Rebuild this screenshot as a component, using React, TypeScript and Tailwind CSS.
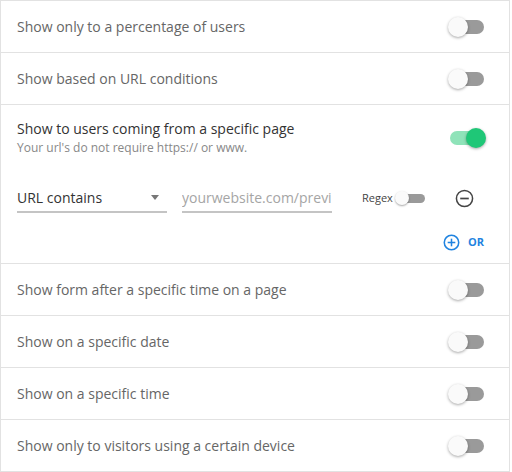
import React from "react";

type ToggleProps = { on?: boolean };

const Toggle = ({ on = false }: ToggleProps) => {
  return (
    <div className="relative w-[36px] h-[20px] flex items-center">
      <div
        className={
          on
            ? "absolute left-[2px] right-0 h-[14px] rounded-full bg-[#8fe3b9]"
            : "absolute left-[2px] right-0 h-[14px] rounded-full bg-[#9a9a9a]"
        }
      ></div>
      <div
        className={
          on
            ? "absolute right-[-2px] w-[20px] h-[20px] rounded-full bg-[#1fc777] shadow-[0_1px_3px_rgba(0,0,0,0.35)]"
            : "absolute left-0 w-[20px] h-[20px] rounded-full bg-[#fafafa] shadow-[0_1px_3px_rgba(0,0,0,0.35)]"
        }
      ></div>
    </div>
  );
};

const SmallToggle = () => {
  return (
    <div className="relative w-[30px] h-[14px] flex items-center">
      <div className="absolute left-[4px] right-0 h-[9px] rounded-full bg-[#9a9a9a]"></div>
      <div className="absolute left-0 w-[14px] h-[14px] rounded-full bg-[#fafafa] shadow-[0_1px_2px_rgba(0,0,0,0.35)]"></div>
    </div>
  );
};

const Row = ({ label }: { label: string }) => {
  return (
    <div className="h-[52px] flex items-center justify-between pl-4 pr-[25px] border-b border-[#e2e2e2]">
      <span className="text-[14px] text-[#666]">{label}</span>
      <Toggle />
    </div>
  );
};

export default function App() {
  return (
    <div className="w-[510px] border-l border-r border-t border-[#e2e2e2] bg-white font-['Open_Sans',sans-serif]">
      <Row label="Show only to a percentage of users" />
      <Row label="Show based on URL conditions" />

      <div className="border-b border-[#e2e2e2] pl-4 pr-[25px] pt-[14px] pb-[12px]">
        <div className="flex items-center justify-between">
          <div className="flex flex-col">
            <span className="text-[14px] leading-[20px] text-[#333]">
              Show to users coming from a specific page
            </span>
            <span className="text-[12px] leading-[18px] text-[#888]">
              Your url's do not require https:// or www.
            </span>
          </div>
          <Toggle on />
        </div>

        <div className="flex items-center mt-[26px] h-[30px]">
          <div className="w-[150px] h-[30px] flex items-center justify-between border-b-2 border-[#c4c4c4] pr-2">
            <span className="text-[14px] text-[#333]">URL contains</span>
            <span className="w-0 h-0 border-l-[4px] border-r-[4px] border-t-[5px] border-l-transparent border-r-transparent border-t-[#777]"></span>
          </div>
          <div className="w-[150px] h-[30px] ml-[15px] flex items-center border-b-2 border-[#c4c4c4] overflow-hidden">
            <span className="text-[14px] text-[#a5a5a5] whitespace-nowrap">
              yourwebsite.com/previ
            </span>
          </div>
          <div className="ml-[30px] flex items-center gap-[2px]">
            <span className="text-[11px] text-[#444]">Regex</span>
            <SmallToggle />
          </div>
          <div className="ml-auto mr-[10px] flex items-center">
            <svg width="19" height="19" viewBox="0 0 20 20">
              <circle cx="10" cy="10" r="8.5" fill="none" stroke="#444" strokeWidth="1.6" />
              <line x1="5.5" y1="10" x2="14.5" y2="10" stroke="#444" strokeWidth="1.8" />
            </svg>
          </div>
        </div>

        <div className="flex items-center justify-end mt-[21px] gap-[8px]">
          <svg width="17" height="17" viewBox="0 0 20 20">
            <circle cx="10" cy="10" r="8.5" fill="none" stroke="#1f83e0" strokeWidth="1.8" />
            <line x1="5.5" y1="10" x2="14.5" y2="10" stroke="#1f83e0" strokeWidth="1.8" />
            <line x1="10" y1="5.5" x2="10" y2="14.5" stroke="#1f83e0" strokeWidth="1.8" />
          </svg>
          <span className="text-[11px] font-bold text-[#1f83e0]">OR</span>
        </div>
      </div>

      <Row label="Show form after a specific time on a page" />
      <Row label="Show on a specific date" />
      <Row label="Show on a specific time" />
      <Row label="Show only to visitors using a certain device" />
    </div>
  );
}
